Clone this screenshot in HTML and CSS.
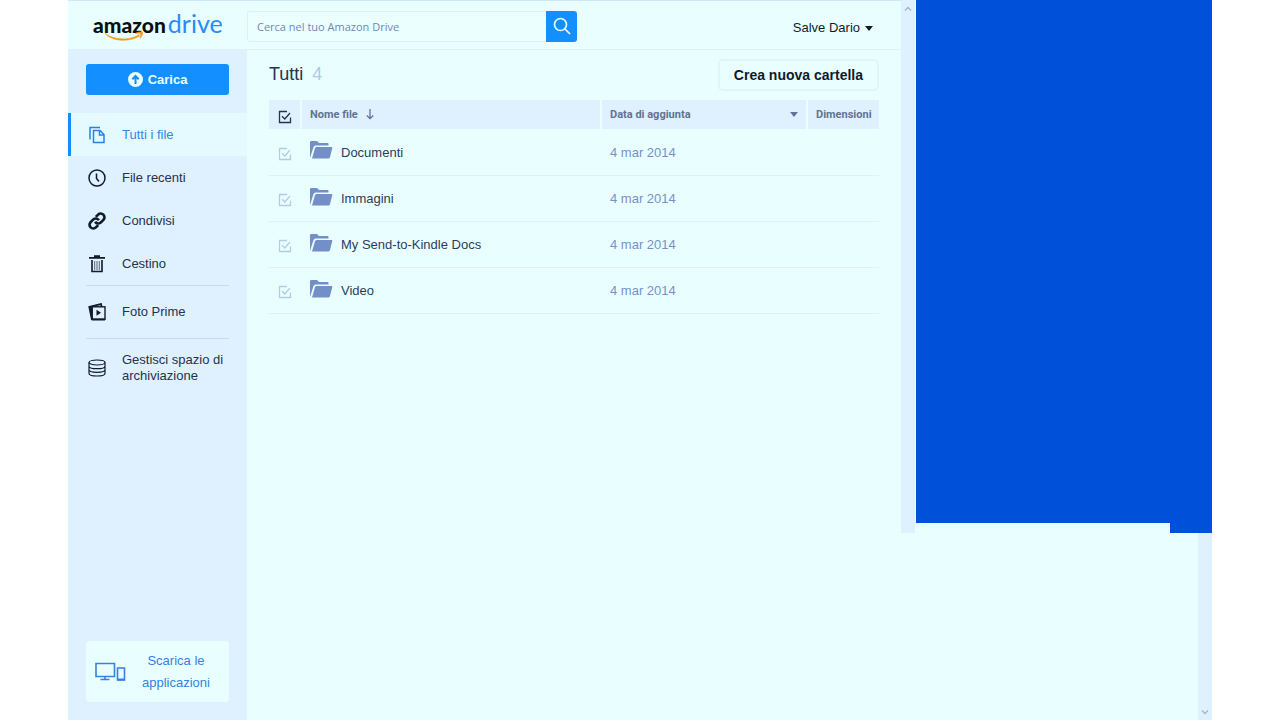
FILE: index.html
```html
<!DOCTYPE html>
<html lang="it">
<head>
<meta charset="utf-8">
<title>Amazon Drive</title>
<link rel="stylesheet" href="styles.css">
</head>
<body>
<svg class="sprite" aria-hidden="true">
  <symbol id="check" viewBox="0 0 14 14"><path d="M9 1.500H1.500v11h11V7.500M4 6.300l2.800 2.700 5.200-6" fill="none" stroke="currentColor" stroke-width="1.300"/></symbol>
  <symbol id="folder" viewBox="0 0 23 18"><path d="M0 17V1.200Q0 0 1.200 0H7l2 2h8.500q1 0 1 1v1.500H5.500Q4 4.500 3.500 6Z"/><path d="M6.800 6H21.500q1 0 .8 1L20 16q-.4 1.500-1.800 1.500H2L5 7.300Q5.500 6 6.800 6Z"/></symbol>
</svg>
<div class="app">
  <div class="drive">
    <header class="topbar">
      <a class="logo" href="#" aria-label="Amazon Drive">
        <span class="logo-name">amazon</span><span class="logo-product">drive</span>
        <svg class="smile" viewBox="0 0 40 11"><path d="M1 2.500C10 9 25 10 35 3.800L35.500 5C25 11.500 8 10.500 1 2.500ZM31.500 2.300C34 .8 37 .6 38.500 1.200C38.800 3 38 5.500 36 7.200C36.200 5.300 37 3.500 36.500 2.700C35.500 2 33.500 2.300 31.500 2.300Z" fill="#f29b17" stroke="#f29b17" stroke-width=".6"/></svg>
      </a>
      <form class="search" role="search">
        <input type="search" aria-label="Cerca nel tuo Amazon Drive" placeholder="Cerca nel tuo Amazon Drive">
        <button type="button" aria-label="Cerca"><svg width="18" height="18" viewBox="0 0 18 18" fill="none" stroke="currentColor" stroke-width="1.700"><circle cx="7.500" cy="7.500" r="6"/><path d="M12 12l5 5"/></svg></button>
      </form>
      <button class="account" type="button">Salve Dario <svg width="8" height="5" viewBox="0 0 8 5"><path d="M0 0h8L4 5Z" fill="currentColor"/></svg></button>
    </header>
    <div class="columns">
      <aside class="sidebar">
        <button class="upload" type="button"><svg width="15" height="15" viewBox="0 0 15 15"><circle cx="7.500" cy="7.500" r="7.500" fill="#e9ffff"/><path d="M7.500 12V4M4.300 7.300L7.500 4l3.200 3.300" fill="none" stroke="#148fff" stroke-width="2"/></svg>Carica</button>
        <nav>
          <a class="item active" href="#"><svg viewBox="0 0 18 18" fill="none" stroke="currentColor" stroke-width="1.500"><path d="M2 13.500V1.500h10"/><path d="M5.500 4.500h6.500l4 4v8H5.500ZM11.500 4.500v4.500H16"/></svg>Tutti i file</a>
          <a class="item" href="#"><svg viewBox="0 0 18 18" fill="none" stroke="currentColor" stroke-width="1.500"><circle cx="9" cy="9" r="8"/><path d="M8.500 4.500V9.500l2.500 3"/></svg>File recenti</a>
          <a class="item" href="#"><svg viewBox="0 0 24 24" fill="none" stroke="currentColor" stroke-width="3.600"><path d="M9.500 13a5 5 0 0 0 8.040.54l3-3a5 5 0 0 0-7.070-7.070l-3 3"/><path d="M14.500 11a5 5 0 0 0-8.040-.54l-3 3a5 5 0 0 0 7.070 7.070l3-3"/></svg>Condivisi</a>
          <a class="item" href="#"><svg viewBox="0 0 18 18" fill="none" stroke="currentColor"><path d="M1 2.800h16M6 1.200h6" stroke-width="1.700"/><path d="M4 5v11.500h10V5" stroke-width="1.600"/><path d="M6.700 6v9M9 6v9M11.300 6v9" stroke-width="1" opacity=".65"/></svg>Cestino</a>
          <a class="item wide" href="#"><svg viewBox="0 0 18 18" fill="none" stroke="currentColor"><path d="M4 17L1.300 3.800L13 1l.6 2.600" stroke-width="1.800"/><path d="M2 5l2-1v11Z" fill="currentColor"/><rect x="4.200" y="3.800" width="12.800" height="12.500" stroke-width="1.400"/><path d="M4 16.500h13" stroke-width="2"/><path d="M8.500 6.800v6l4.500-3Z" fill="currentColor" stroke="none"/></svg>Foto Prime</a>
          <a class="item wide" href="#"><svg viewBox="0 0 18 18" fill="none" stroke="currentColor" stroke-width="1.200"><ellipse cx="9" cy="3.500" rx="8" ry="2.500"/><path d="M1 3.500v11c0 1.400 3.600 2.500 8 2.500s8-1.100 8-2.500v-11M1 7.200c0 1.400 3.600 2.500 8 2.500s8-1.100 8-2.500M1 10.800c0 1.400 3.600 2.500 8 2.500s8-1.100 8-2.500"/></svg><span>Gestisci spazio di archiviazione</span></a>
        </nav>
        <a class="apps" href="#"><svg width="31" height="20" viewBox="0 0 31 20" fill="none" stroke="currentColor" stroke-width="1.600"><path d="M1 1.500h18.500v13H1ZM10 14.500V18M5.500 17.500h9"/><path d="M22.500 6h7v12h-7Z"/><path d="M22.500 17.500h7" stroke-width="2"/></svg><span>Scarica le applicazioni</span></a>
      </aside>
      <main>
        <div class="heading">
          <h1>Tutti <span>4</span></h1>
          <button class="create" type="button">Crea nuova cartella</button>
        </div>
        <table>
          <colgroup><col class="c-check"><col><col class="c-date"><col class="c-size"></colgroup>
          <thead><tr>
            <th><label class="tick"><input type="checkbox" aria-label="Seleziona tutto"><svg><use href="#check"/></svg></label></th>
            <th><button type="button">Nome file <svg width="8" height="11" viewBox="0 0 8 11" fill="none" stroke="currentColor" stroke-width="1.300"><path d="M4 0v9.500M.8 6.500L4 9.700l3.200-3.200"/></svg></button></th>
            <th><button class="spread" type="button">Data di aggiunta <svg width="8" height="5" viewBox="0 0 8 5"><path d="M0 0h8L4 5Z" fill="currentColor"/></svg></button></th>
            <th>Dimensioni</th>
          </tr></thead>
          <tbody>
            <tr><td><label class="tick"><input type="checkbox" aria-label="Seleziona Documenti"><svg><use href="#check"/></svg></label></td><td><a class="file" href="#"><svg><use href="#folder"/></svg>Documenti</a></td><td>4 mar 2014</td><td></td></tr>
            <tr><td><label class="tick"><input type="checkbox" aria-label="Seleziona Immagini"><svg><use href="#check"/></svg></label></td><td><a class="file" href="#"><svg><use href="#folder"/></svg>Immagini</a></td><td>4 mar 2014</td><td></td></tr>
            <tr><td><label class="tick"><input type="checkbox" aria-label="Seleziona My Send-to-Kindle Docs"><svg><use href="#check"/></svg></label></td><td><a class="file" href="#"><svg><use href="#folder"/></svg>My Send-to-Kindle Docs</a></td><td>4 mar 2014</td><td></td></tr>
            <tr><td><label class="tick"><input type="checkbox" aria-label="Seleziona Video"><svg><use href="#check"/></svg></label></td><td><a class="file" href="#"><svg><use href="#folder"/></svg>Video</a></td><td>4 mar 2014</td><td></td></tr>
          </tbody>
        </table>
      </main>
    </div>
  </div>
  <div class="side">
    <div class="side-top">
      <div class="scroll"><svg width="8" height="5" viewBox="0 0 8 5"><path d="M1 4.500l3-3 3 3" fill="none" stroke="currentColor" stroke-width="1.300"/></svg></div>
      <div class="panel"><div class="panel-body"></div><div class="panel-foot"></div></div>
    </div>
    <div class="scroll scroll-end"><svg width="8" height="5" viewBox="0 0 8 5"><path d="M1 .5l3 3 3-3" fill="none" stroke="currentColor" stroke-width="1.300"/></svg></div>
  </div>
</div>
</body>
</html>
```
FILE: styles.css
```css
* { box-sizing: border-box; }
body {
  margin: 0;
  background: #fff;
  color: #26324c;
  font: 13px/16px "Liberation Sans", Arial, sans-serif;
}
a { color: inherit; text-decoration: none; }
button { margin: 0; padding: 0; border: 0; background: none; color: inherit; font: inherit; cursor: pointer; }
svg { display: block; flex: none; }
.sprite { position: absolute; width: 0; height: 0; }

.app { display: flex; min-height: 100vh; margin: 0 68px; background: #e9ffff; }
.drive { flex: 1; display: flex; flex-direction: column; min-width: 0; border-top: 1px solid #cfe8f8; }

.topbar { display: flex; align-items: center; height: 49px; padding: 2px 28px 0 0; border-bottom: 1px solid #dcf2fb; }
.logo { position: relative; display: flex; align-items: baseline; gap: 2px; width: 179px; padding: 0 0 4px 25px; }
.logo-name { color: #0b0f14; font: 900 21px/28px Lato, sans-serif; }
.logo-product { color: #2a8bf2; font: 400 25px/28px Lato, sans-serif; }
.smile { position: absolute; left: 36px; top: 22px; width: 40px; height: 11px; }
.search { display: flex; width: 330px; height: 31px; }
.search input {
  flex: 1; min-width: 0; padding: 1px 9px 0; border: 1px solid #dcf0fb; border-right: 0; border-radius: 3px 0 0 3px;
  background: #ebffff; color: #26324c; font: 11px/16px "Open Sans", sans-serif; appearance: none;
}
.search input::placeholder { color: #7286b5; opacity: 1; }
.search button { display: grid; place-items: center; width: 31px; border-radius: 0 3px 3px 0; background: #148fff; color: #e9ffff; }
.account { display: flex; align-items: center; gap: 5px; margin-left: auto; padding-top: 4px; color: #111a2c; }

.columns { flex: 1; display: flex; }
.sidebar { display: flex; flex-direction: column; width: 179px; padding: 14px 0 18px; background: #dff1ff; }
.upload {
  display: flex; align-items: center; justify-content: center; gap: 5px; height: 31px; margin: 0 18px 18px;
  border-radius: 3px; background: #148fff; color: #e9ffff; font-weight: bold;
}
.item { display: flex; align-items: center; gap: 16px; min-height: 43px; padding: 0 18px 0 20px; }
.item svg { width: 18px; height: 18px; color: #101a2b; }
.item.active { padding-left: 17px; border-left: 3px solid #148fff; background: #e5faff; color: #3388e0; }
.item.active svg { color: #2583e6; }
.item.wide { position: relative; min-height: 53px; padding-right: 12px; }
.item.wide + .item.wide { min-height: 60px; }
.item.wide::before { content: ""; position: absolute; top: 0; left: 18px; right: 18px; border-top: 1px solid #c6dbef; }
.apps {
  display: flex; align-items: center; gap: 12px; min-height: 61px; margin: auto 18px 0; padding: 0 15px 0 9px;
  border-radius: 4px; background: #e9ffff; color: #3482dd; line-height: 22px; text-align: center;
}
.apps span { flex: 1; }

main { flex: 1; min-width: 0; padding: 9px 22px; }
.heading { display: flex; justify-content: space-between; height: 41px; }
h1 { margin: 0; font-size: 18px; font-weight: normal; line-height: 31px; }
h1 span { margin-left: 4px; color: #b0c8ea; }
.create { height: 32px; padding: 0 14px; border: 2px solid #def5fb; border-radius: 5px; color: #111a2c; font-weight: bold; font-size: 14px; }

table { width: 100%; border-collapse: collapse; table-layout: fixed; }
.c-check { width: 32px; }
.c-date { width: 206px; }
.c-size { width: 72px; }
th {
  height: 29px; padding: 0 8px; background: #dff1ff; color: #617397; text-align: left; white-space: nowrap;
  font: bold 11px/16px Roboto, sans-serif;
}
th + th { border-left: 2px solid #e9ffff; }
th:first-child { padding: 4px 0 0 9px; }
th button { display: flex; align-items: center; gap: 8px; }
th .spread { width: 100%; justify-content: space-between; }
td { height: 46px; padding: 2px 9px 0; border-bottom: 1px solid #dcf2fb; color: #7890c9; }
td:first-child { padding: 4px 0 0 9px; }
.tick { position: relative; display: block; width: 14px; height: 14px; color: #b4cce3; }
th .tick { color: #26344b; }
.tick input { position: absolute; inset: 0; width: 14px; height: 14px; margin: 0; opacity: 0; }
.tick svg { width: 14px; height: 14px; }
.file { display: flex; align-items: center; gap: 8px; color: #2d3b5e; }
.file svg { width: 23px; height: 18px; margin-bottom: 5px; fill: #748ec8; }

.side { display: flex; flex-direction: column; width: 311px; }
.side-top { display: flex; flex: none; gap: 1px; height: 74vh; }
.scroll { width: 14px; padding: 6px 3px; background: #dff1ff; color: #9fb5d0; }
.scroll-end { display: flex; align-items: flex-end; align-self: flex-end; flex: 1; padding-bottom: 5px; }
.panel { flex: 1; display: flex; flex-direction: column; }
.panel-body { flex: 1; background: #0050da; }
.panel-foot { align-self: flex-end; width: 42px; height: 10px; background: #0050da; }
```
